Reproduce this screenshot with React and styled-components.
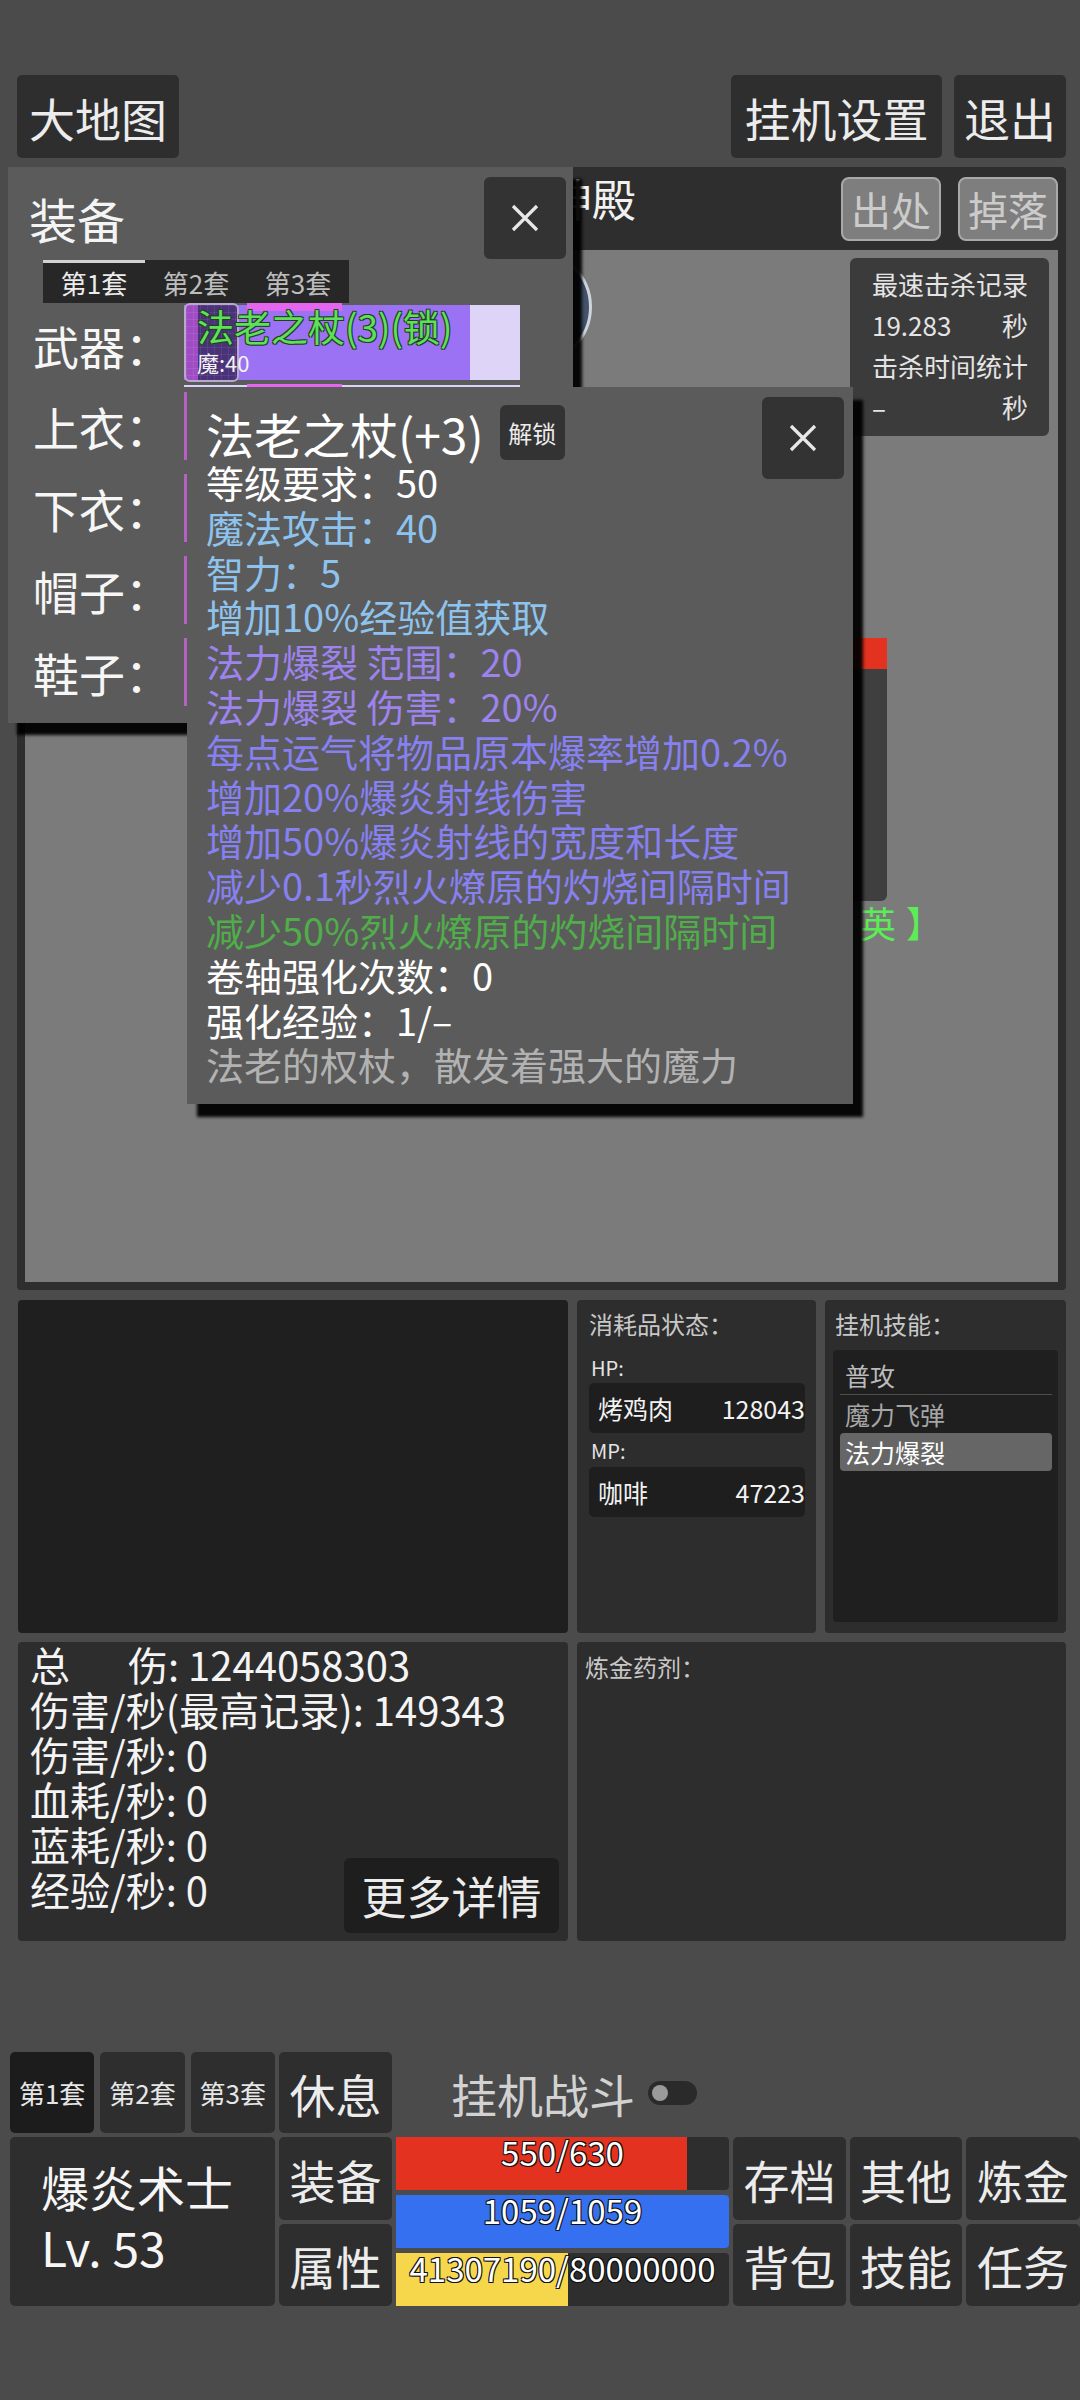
import React from "react";
import styled, { createGlobalStyle } from "styled-components";

const FONT = `"Noto Sans CJK SC", "Noto Sans", sans-serif`;

const GlobalStyle = createGlobalStyle`
  * { box-sizing: border-box; }
  html, body { margin: 0; padding: 0; background: #4b4b4b; }
  body { font-family: ${FONT}; color: #f0f0f0; }
`;

const Page = styled.div`
  position: relative;
  width: 1080px;
  height: 2400px;
  overflow: hidden;
  padding-top: 75px;
  background: #4b4b4b;
`;

/* ---------- top bar ---------- */
const TopBar = styled.div`
  display: flex;
  height: 83px;
  padding: 0 14px 0 17px;
`;
const RightGroup = styled.div`
  display: flex;
  gap: 12px;
  margin-left: auto;
`;
const TopButton = styled.div`
  width: ${(p) => p.$w}px;
  height: 100%;
  display: flex;
  align-items: center;
  justify-content: center;
  background: #2e2e2e;
  border-radius: 5px;
  font-size: 46px;
  line-height: 1;
  color: #ececec;
`;

/* ---------- main panel ---------- */
const MainPanel = styled.div`
  margin: 9px 14px 0 17px;
  height: 1123px;
  background: #2e2e2e;
  border-radius: 4px;
  padding: 0 8px 8px;
  display: flex;
  flex-direction: column;
`;
const PanelHeader = styled.div`
  height: 83px;
  display: flex;
  align-items: center;
`;
const MapTitle = styled.div`
  align-self: flex-start;
  margin: 9px 0 0 523px;
  font-size: 44px;
  line-height: 1;
  color: #f2f2f2;
`;
const HeaderButtons = styled.div`
  margin-left: auto;
  display: flex;
  gap: 17px;
`;
const GrayButton = styled.div`
  width: 100px;
  height: 64px;
  display: flex;
  align-items: center;
  justify-content: center;
  background: #7e7e7e;
  border: 2px solid #a9a9a9;
  border-radius: 8px;
  font-size: 40px;
  line-height: 1;
  color: #cbcbcb;
`;
const BattleField = styled.div`
  position: relative;
  flex: 1;
  background: #7b7b7b;
  overflow: hidden;
`;
const Avatar = styled.div`
  position: absolute;
  left: 453px;
  top: 0;
  width: 114px;
  height: 114px;
  border-radius: 50%;
  background: #44536a;
  border: 3px solid #cdd4dc;
`;
const MonsterCard = styled.div`
  position: absolute;
  left: 662px;
  top: 388px;
  width: 200px;
  height: 263px;
  background: #3f3f3f;
  border-radius: 0 0 6px 6px;
  overflow: hidden;
`;
const MonsterHp = styled.div`
  height: 31px;
  background: #e3321f;
`;
const MonsterTag = styled.div`
  position: absolute;
  right: 106px;
  top: 654px;
  font-size: 36px;
  line-height: 1;
  letter-spacing: 10px;
  color: #5cec55;
  white-space: nowrap;
`;
const RecordBox = styled.div`
  position: absolute;
  top: 8px;
  right: 9px;
  width: 199px;
  background: #3b3b3b;
  border-radius: 6px;
  padding: 5px 21px 9px 22px;
  font-size: 26px;
  color: #e4e4e4;
`;
const RecordRow = styled.div`
  height: 41px;
  display: flex;
  align-items: center;
  justify-content: space-between;
  line-height: 1;
`;

/* ---------- close button ---------- */
const CloseBtn = styled.div`
  width: 82px;
  height: 82px;
  display: flex;
  align-items: center;
  justify-content: center;
  background: #333333;
  border-radius: 6px;
`;
const CrossIcon = () => (
  <svg width="28" height="28" viewBox="0 0 28 28">
    <path d="M2 2 L26 26 M26 2 L2 26" stroke="#e8e8e8" strokeWidth="3.2" fill="none" />
  </svg>
);

/* ---------- equipment popup ---------- */
const EquipPopup = styled.div`
  position: absolute;
  left: 8px;
  top: 167px;
  width: 565px;
  height: 556px;
  background: #5b5b5b;
  box-shadow: 9px 12px 3px rgba(0, 0, 0, 0.95);
  padding: 10px 7px 0 0;
`;
const PopupHead = styled.div`
  display: flex;
  align-items: center;
  justify-content: space-between;
  height: 82px;
  padding-left: 21px;
`;
const PopupTitle = styled.div`
  font-size: 48px;
  line-height: 1;
  color: #f4f4f4;
`;
const SetTabs = styled.div`
  display: flex;
  margin: 1px 0 0 35px;
`;
const SetTab = styled.div`
  width: 102px;
  height: 43px;
  display: flex;
  align-items: center;
  justify-content: center;
  background: #272727;
  border-top: 3px solid ${(p) => (p.$active ? "#d2d2d2" : "#272727")};
  font-size: 26px;
  line-height: 1;
  color: ${(p) => (p.$active ? "#ececec" : "#bdbdbd")};
`;
const SlotRow = styled.div`
  display: grid;
  grid-template-columns: 151px 336px;
  align-items: center;
  height: 82px;
  padding-left: 25px;
`;
const SlotLabel = styled.div`
  font-size: 46px;
  line-height: 1;
  color: #f6f6f6;
`;
const EmptySlot = styled.div`
  height: 68px;
  border-left: 3px solid #b65fc4;
`;
const ItemSlot = styled.div`
  position: relative;
  height: 84px;
  display: flex;
  background:
    linear-gradient(#e466ee, #e466ee) 63px 0 / 95px 8px no-repeat,
    linear-gradient(#e466ee, #e466ee) 63px 81px / 95px 3px no-repeat,
    linear-gradient(#dcd4f4, #dcd4f4) 0 82px / 100% 2px no-repeat,
    linear-gradient(90deg, #9a72f3 0 286px, #ddd4f7 286px) 0 2px / 100% 75px no-repeat;
`;
const ItemIcon = styled.div`
  width: 55px;
  height: 79px;
  border: 2px solid #b8a9cc;
  border-radius: 6px;
  background-color: #4a3278;
  background-image:
    linear-gradient(rgba(255, 255, 255, 0.07) 1px, transparent 1px),
    linear-gradient(90deg, rgba(255, 255, 255, 0.07) 1px, transparent 1px),
    linear-gradient(90deg, #a04cc4 0 12px, transparent 12px);
  background-size: 7px 7px, 7px 7px, 100% 100%;
`;
const ItemName = styled.div`
  position: absolute;
  left: 13px;
  top: 5px;
  font-size: 37px;
  line-height: 1;
  color: #5fe05c;
  white-space: nowrap;
  text-shadow: -1px -1px 0 #24401f, 1px -1px 0 #24401f, -1px 1px 0 #24401f, 1px 1px 0 #24401f;
`;
const ItemStat = styled.div`
  position: absolute;
  left: 13px;
  top: 48px;
  font-size: 22px;
  line-height: 1;
  color: #f2f2f2;
`;

/* ---------- tooltip ---------- */
const Tooltip = styled.div`
  position: absolute;
  left: 187px;
  top: 387px;
  width: 666px;
  height: 717px;
  background: #5b5b5b;
  box-shadow: 10px 13px 3px rgba(0, 0, 0, 0.95);
  padding: 18px 0 0 19px;
`;
const TipHead = styled.div`
  display: flex;
  align-items: center;
  gap: 16px;
  height: 55px;
`;
const TipTitle = styled.div`
  font-size: 48px;
  line-height: 1;
  color: #ffffff;
  white-space: nowrap;
`;
const SmallButton = styled.div`
  width: 65px;
  height: 55px;
  display: flex;
  align-items: center;
  justify-content: center;
  background: #333333;
  border-radius: 6px;
  font-size: 24px;
  line-height: 1;
  color: #ececec;
`;
const TipClose = styled(CloseBtn)`
  position: absolute;
  top: 10px;
  right: 9px;
`;
const TipLine = styled.div`
  font-size: 38px;
  line-height: 44.8px;
  color: ${(p) => p.$c};
  white-space: nowrap;
`;

/* ---------- info grid ---------- */
const InfoGrid = styled.div`
  margin: 10px 14px 0 18px;
  display: grid;
  grid-template-columns: 550px 239px 241px;
  grid-template-rows: 333px 299px;
  gap: 9px;
`;
const BlackPanel = styled.div`
  background: #1f1f1f;
  border-radius: 4px;
`;
const Panel = styled.div`
  background: #2d2d2d;
  border-radius: 4px;
  grid-column: ${(p) => p.$span || "auto"};
  padding: ${(p) => p.$pad || "0"};
`;
const PanelTitle = styled.div`
  font-size: 24px;
  line-height: 30px;
  color: #c8c8c8;
  padding-left: ${(p) => p.$indent || 0}px;
`;
const SmallLabel = styled.div`
  font-size: 20px;
  line-height: 24px;
  color: #e4e4e4;
  margin-top: ${(p) => p.$mt}px;
  padding-left: 2px;
`;
const SupplyBox = styled.div`
  height: 50px;
  margin-top: ${(p) => p.$mt}px;
  display: flex;
  align-items: center;
  justify-content: space-between;
  background: #1e1e1e;
  border-radius: 5px;
  padding-left: 9px;
  font-size: 25px;
  line-height: 1;
  color: #f2f2f2;
`;
const SkillList = styled.div`
  margin: 11px 8px 0 8px;
  height: 272px;
  background: #1f1f1f;
  border-radius: 4px;
  padding: 6px 6px 0 7px;
`;
const SkillItem = styled.div`
  height: 38px;
  display: flex;
  align-items: center;
  padding-left: 5px;
  font-size: 25px;
  line-height: 1;
  border-radius: ${(p) => (p.$active ? "4px" : "0")};
  background: ${(p) => (p.$active ? "#666666" : "transparent")};
  color: ${(p) => (p.$active ? "#ffffff" : p.$dim ? "#a6a6a6" : "#bbbbbb")};
  border-bottom: ${(p) => (p.$line ? "1px solid #4e4e4e" : "none")};
  box-sizing: content-box;
`;
const StatsPanel = styled.div`
  background: #2d2d2d;
  border-radius: 4px;
  display: grid;
  grid-template-areas: "stack";
  padding: 0 9px 8px 12px;
`;
const StatLines = styled.div`
  grid-area: stack;
  align-self: start;
  display: flex;
  flex-direction: column;
`;
const StatLine = styled.div`
  font-size: 40px;
  line-height: 45px;
  color: #f4f4f4;
  white-space: nowrap;
`;
const Spread = styled.span`
  display: inline-block;
  margin-right: 58px;
`;
const DetailButton = styled.div`
  grid-area: stack;
  justify-self: end;
  align-self: end;
  width: 215px;
  height: 75px;
  display: flex;
  align-items: center;
  justify-content: center;
  background: #1e1e1e;
  border-radius: 6px;
  font-size: 45px;
  line-height: 1;
  color: #ececec;
  white-space: nowrap;
`;

/* ---------- control bar ---------- */
const ControlBar = styled.div`
  margin-top: 111px;
  padding-left: 10px;
  display: grid;
  grid-template-columns: 265px 113px 333px 113px 112px 114px;
  grid-template-rows: 81px 83px 82px;
  column-gap: 4px;
  row-gap: 4px;
`;
const SetGroup = styled.div`
  display: flex;
  gap: 6px;
`;
const SetButton = styled.div`
  flex: 1;
  display: flex;
  align-items: center;
  justify-content: center;
  background: ${(p) => (p.$active ? "#1c1c1c" : "#2e2e2e")};
  border-radius: 5px;
  font-size: 26px;
  line-height: 1;
  color: #e6e6e6;
`;
const CtrlButton = styled.div`
  grid-column: ${(p) => p.$col};
  grid-row: ${(p) => p.$row};
  display: flex;
  align-items: center;
  justify-content: center;
  background: #2e2e2e;
  border-radius: 5px;
  font-size: 46px;
  line-height: 1;
  color: #ececec;
`;
const AutoFight = styled.div`
  grid-column: 3 / span 4;
  display: flex;
  align-items: center;
  gap: 13px;
  padding-left: 55px;
  font-size: 46px;
  line-height: 1;
  color: #d2d2d2;
`;
const Toggle = styled.div`
  width: 49px;
  height: 24px;
  border-radius: 12px;
  background: #2a2a2a;
  display: flex;
  align-items: center;
  padding-left: 4px;
`;
const Knob = styled.div`
  width: 16px;
  height: 16px;
  border-radius: 50%;
  background: #9a9a9a;
`;
const CharBox = styled.div`
  grid-column: 1;
  grid-row: 2 / span 2;
  background: #2e2e2e;
  border-radius: 5px;
  padding: 25px 0 0 31px;
  display: flex;
  flex-direction: column;
  gap: 12px;
  font-size: 48px;
  line-height: 1;
  color: #f6f6f6;
`;
const Bars = styled.div`
  grid-column: 3;
  grid-row: 2 / span 2;
  display: flex;
  flex-direction: column;
  gap: 5px;
`;
const Bar = styled.div`
  position: relative;
  flex: 1;
  background: #2e2e2e;
  border-radius: 0 4px 4px 0;
  overflow: hidden;
`;
const BarFill = styled.div`
  height: 100%;
  background: ${(p) => p.$color};
`;
const BarLabel = styled.div`
  position: absolute;
  left: 0;
  right: 0;
  top: -1px;
  text-align: center;
  font-size: 33px;
  line-height: 1;
  color: #ffffff;
  text-shadow: -1px -1px 0 #111, 1px -1px 0 #111, -1px 1px 0 #111, 1px 1px 0 #111;
`;

const tipLines = [
  ["等级要求：50", "#ffffff"],
  ["魔法攻击：40", "#8ec3ee"],
  ["智力：5", "#8ec3ee"],
  ["增加10%经验值获取", "#8ec3ee"],
  ["法力爆裂 范围：20", "#9d83ee"],
  ["法力爆裂 伤害：20%", "#9d83ee"],
  ["每点运气将物品原本爆率增加0.2%", "#8680f0"],
  ["增加20%爆炎射线伤害", "#8680f0"],
  ["增加50%爆炎射线的宽度和长度", "#8680f0"],
  ["减少0.1秒烈火燎原的灼烧间隔时间", "#8680f0"],
  ["减少50%烈火燎原的灼烧间隔时间", "#50ad4a"],
  ["卷轴强化次数：0", "#ffffff"],
  ["强化经验：1/–", "#ffffff"],
  ["法老的权杖，散发着强大的魔力", "#b2b2b2"],
];

const bars = [
  { cur: 550, max: 630, color: "#e3321f" },
  { cur: 1059, max: 1059, color: "#3470f0" },
  { cur: 41307190, max: 80000000, color: "#f6d74c" },
];

export default function App() {
  return (
    <>
      <GlobalStyle />
      <Page>
        <TopBar>
          <TopButton $w={162}>大地图</TopButton>
          <RightGroup>
            <TopButton $w={211}>挂机设置</TopButton>
            <TopButton $w={112}>退出</TopButton>
          </RightGroup>
        </TopBar>

        <MainPanel>
          <PanelHeader>
            <MapTitle>神殿</MapTitle>
            <HeaderButtons>
              <GrayButton>出处</GrayButton>
              <GrayButton>掉落</GrayButton>
            </HeaderButtons>
          </PanelHeader>
          <BattleField>
            <Avatar />
            <MonsterCard>
              <MonsterHp />
            </MonsterCard>
            <MonsterTag>【精英】</MonsterTag>
            <RecordBox>
              <RecordRow>最速击杀记录</RecordRow>
              <RecordRow>
                <span>19.283</span>
                <span>秒</span>
              </RecordRow>
              <RecordRow>击杀时间统计</RecordRow>
              <RecordRow>
                <span>–</span>
                <span>秒</span>
              </RecordRow>
            </RecordBox>
          </BattleField>
        </MainPanel>

        <InfoGrid>
          <BlackPanel />
          <Panel $pad="9px 11px 0 12px">
            <PanelTitle>消耗品状态：</PanelTitle>
            <SmallLabel $mt={17}>HP:</SmallLabel>
            <SupplyBox $mt={3}>
              <span>烤鸡肉</span>
              <span>128043</span>
            </SupplyBox>
            <SmallLabel $mt={6}>MP:</SmallLabel>
            <SupplyBox $mt={4}>
              <span>咖啡</span>
              <span>47223</span>
            </SupplyBox>
          </Panel>
          <Panel $pad="9px 0 0 0">
            <PanelTitle $indent={10}>挂机技能：</PanelTitle>
            <SkillList>
              <SkillItem $line>普攻</SkillItem>
              <SkillItem $dim>魔力飞弹</SkillItem>
              <SkillItem $active>法力爆裂</SkillItem>
            </SkillList>
          </Panel>
          <StatsPanel>
            <StatLines>
              <StatLine>
                <Spread>总</Spread>伤: 1244058303
              </StatLine>
              <StatLine>伤害/秒(最高记录): 149343</StatLine>
              <StatLine>伤害/秒: 0</StatLine>
              <StatLine>血耗/秒: 0</StatLine>
              <StatLine>蓝耗/秒: 0</StatLine>
              <StatLine>经验/秒: 0</StatLine>
            </StatLines>
            <DetailButton>更多详情</DetailButton>
          </StatsPanel>
          <Panel $span="2 / span 2" $pad="10px 0 0 8px">
            <PanelTitle>炼金药剂：</PanelTitle>
          </Panel>
        </InfoGrid>

        <ControlBar>
          <SetGroup>
            <SetButton $active>第1套</SetButton>
            <SetButton>第2套</SetButton>
            <SetButton>第3套</SetButton>
          </SetGroup>
          <CtrlButton $col={2} $row={1}>休息</CtrlButton>
          <AutoFight>
            挂机战斗
            <Toggle>
              <Knob />
            </Toggle>
          </AutoFight>
          <CharBox>
            <div>爆炎术士</div>
            <div>Lv. 53</div>
          </CharBox>
          <CtrlButton $col={2} $row={2}>装备</CtrlButton>
          <CtrlButton $col={2} $row={3}>属性</CtrlButton>
          <Bars>
            {bars.map((b, i) => (
              <Bar key={i}>
                <BarFill $color={b.color} style={{ width: `${(b.cur / b.max) * 100}%` }} />
                <BarLabel>
                  {b.cur}/{b.max}
                </BarLabel>
              </Bar>
            ))}
          </Bars>
          <CtrlButton $col={4} $row={2}>存档</CtrlButton>
          <CtrlButton $col={5} $row={2}>其他</CtrlButton>
          <CtrlButton $col={6} $row={2}>炼金</CtrlButton>
          <CtrlButton $col={4} $row={3}>背包</CtrlButton>
          <CtrlButton $col={5} $row={3}>技能</CtrlButton>
          <CtrlButton $col={6} $row={3}>任务</CtrlButton>
        </ControlBar>

        <EquipPopup>
          <PopupHead>
            <PopupTitle>装备</PopupTitle>
            <CloseBtn>
              <CrossIcon />
            </CloseBtn>
          </PopupHead>
          <SetTabs>
            <SetTab $active>第1套</SetTab>
            <SetTab>第2套</SetTab>
            <SetTab>第3套</SetTab>
          </SetTabs>
          <SlotRow>
            <SlotLabel>武器：</SlotLabel>
            <ItemSlot>
              <ItemIcon />
              <ItemName>法老之杖(3)(锁)</ItemName>
              <ItemStat>魔:40</ItemStat>
            </ItemSlot>
          </SlotRow>
          {["上衣：", "下衣：", "帽子：", "鞋子："].map((l) => (
            <SlotRow key={l}>
              <SlotLabel>{l}</SlotLabel>
              <EmptySlot />
            </SlotRow>
          ))}
        </EquipPopup>

        <Tooltip>
          <TipHead>
            <TipTitle>法老之杖(+3)</TipTitle>
            <SmallButton>解锁</SmallButton>
          </TipHead>
          {tipLines.map(([t, c]) => (
            <TipLine key={t} $c={c}>
              {t}
            </TipLine>
          ))}
          <TipClose>
            <CrossIcon />
          </TipClose>
        </Tooltip>
      </Page>
    </>
  );
}
